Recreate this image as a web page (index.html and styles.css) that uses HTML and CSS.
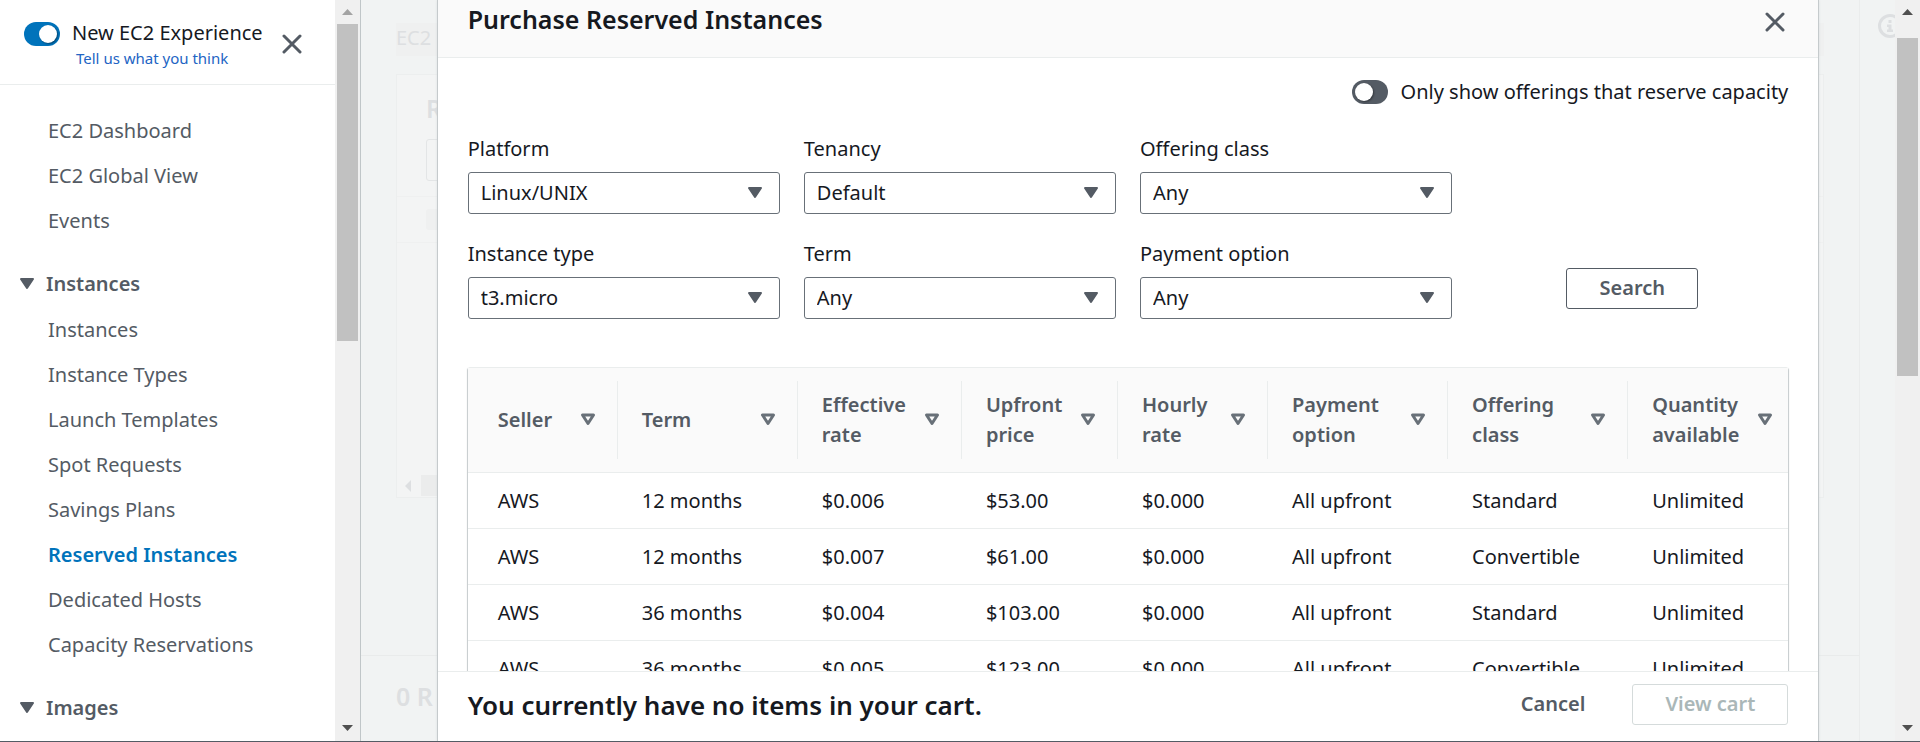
FILE: index.html
```html
<!DOCTYPE html>
<html lang="en">
<head>
  <meta charset="UTF-8">
  <title>Purchase Reserved Instances</title>
  <link rel="stylesheet" href="styles.css">
</head>
<body>

  <svg class="defs" width="0" height="0">
    <symbol id="caret" viewBox="0 0 16 13"><path d="M2 2h12l-6 9z" fill="currentColor" stroke="currentColor" stroke-width="2" stroke-linejoin="round"/></symbol>
    <symbol id="sort" viewBox="0 0 16 13"><path d="M2.5 2h11L8 10.500z" fill="none" stroke="currentColor" stroke-width="3" stroke-linejoin="round"/></symbol>
    <symbol id="close" viewBox="0 0 20 20"><path d="M2 2l16 16M18 2L2 18" fill="none" stroke="currentColor" stroke-width="3" stroke-linecap="round"/></symbol>
    <symbol id="arrow-up" viewBox="0 0 11 6"><path d="M0 6L5.500 0 11 6z" fill="currentColor"/></symbol>
    <symbol id="arrow-down" viewBox="0 0 11 6"><path d="M0 0h11L5.500 6z" fill="currentColor"/></symbol>
  </svg>

  <aside class="sidebar">
    <div class="sidebar-content">
      <div class="sidebar-header">
        <input type="checkbox" class="toggle" id="new-experience" checked>
        <div class="experience">
          <label for="new-experience">New EC2 Experience</label>
          <a href="#">Tell us what you think</a>
        </div>
        <button class="btn-icon" aria-label="Close navigation"><svg width="20" height="20"><use href="#close"/></svg></button>
      </div>
      <nav>
        <ul>
          <li><a href="#">EC2 Dashboard</a></li>
          <li><a href="#">EC2 Global View</a></li>
          <li><a href="#">Events</a></li>
        </ul>
        <button class="nav-heading"><svg width="16" height="13"><use href="#caret"/></svg>Instances</button>
        <ul>
          <li><a href="#">Instances</a></li>
          <li><a href="#">Instance Types</a></li>
          <li><a href="#">Launch Templates</a></li>
          <li><a href="#">Spot Requests</a></li>
          <li><a href="#">Savings Plans</a></li>
          <li><a href="#" class="active">Reserved Instances</a></li>
          <li><a href="#">Dedicated Hosts</a></li>
          <li><a href="#">Capacity Reservations</a></li>
        </ul>
        <button class="nav-heading"><svg width="16" height="13"><use href="#caret"/></svg>Images</button>
      </nav>
    </div>
    <div class="scrollbar">
      <svg class="disabled" width="11" height="6"><use href="#arrow-up"/></svg>
      <div class="track"><div class="thumb"></div></div>
      <svg width="11" height="6"><use href="#arrow-down"/></svg>
    </div>
  </aside>

  <main>
    <!-- page behind the dialog -->
    <div class="page">
      <div class="page-content">
        <div class="page-top">
          <div class="breadcrumb">EC2</div>
          <div class="panel">
            <div class="panel-header">
              <h2>R</h2>
              <div class="filter"></div>
            </div>
            <div class="panel-columns"><div class="chip"></div></div>
            <div class="panel-scroll">
              <svg width="6" height="12" viewBox="0 0 6 12"><path d="M6 0v12L0 6z" fill="currentColor"/></svg>
              <div class="panel-thumb"></div>
            </div>
          </div>
        </div>
        <div class="page-bottom"><h2>0 R</h2></div>
      </div>
      <div class="help-strip">
        <svg width="24" height="24" viewBox="0 0 24 24"><circle cx="12" cy="12" r="10.500" fill="none" stroke="currentColor" stroke-width="3"/><path d="M10.500 6h3v3h-3zM9 10.500h4.500v5H15V18H9v-2.500h1.500V13H9z" fill="currentColor"/></svg>
      </div>
    </div>

    <div class="modal" role="dialog" aria-labelledby="modal-title">
      <header class="modal-header">
        <h1 id="modal-title">Purchase Reserved Instances</h1>
        <button class="btn-icon" aria-label="Close"><svg width="20" height="20"><use href="#close"/></svg></button>
      </header>

      <div class="modal-body">
        <div class="capacity">
          <input type="checkbox" class="toggle" id="reserve-capacity">
          <label for="reserve-capacity">Only show offerings that reserve capacity</label>
        </div>

        <form class="filters">
          <div class="field">
            <label for="platform">Platform</label>
            <div class="select"><select id="platform"><option>Linux/UNIX</option></select><svg width="16" height="13"><use href="#caret"/></svg></div>
          </div>
          <div class="field">
            <label for="tenancy">Tenancy</label>
            <div class="select"><select id="tenancy"><option>Default</option></select><svg width="16" height="13"><use href="#caret"/></svg></div>
          </div>
          <div class="field">
            <label for="offering-class">Offering class</label>
            <div class="select"><select id="offering-class"><option>Any</option></select><svg width="16" height="13"><use href="#caret"/></svg></div>
          </div>
          <div class="field row-start">
            <label for="instance-type">Instance type</label>
            <div class="select"><select id="instance-type"><option>t3.micro</option></select><svg width="16" height="13"><use href="#caret"/></svg></div>
          </div>
          <div class="field">
            <label for="term">Term</label>
            <div class="select"><select id="term"><option>Any</option></select><svg width="16" height="13"><use href="#caret"/></svg></div>
          </div>
          <div class="field">
            <label for="payment-option">Payment option</label>
            <div class="select"><select id="payment-option"><option>Any</option></select><svg width="16" height="13"><use href="#caret"/></svg></div>
          </div>
          <button type="button" class="btn btn-search">Search</button>
        </form>

        <div class="table-wrap">
          <table>
            <colgroup>
              <col class="col-seller"><col class="col-wide"><col class="col-rate"><col class="col-price">
              <col class="col-hourly"><col class="col-wide"><col class="col-wide"><col class="col-quantity">
            </colgroup>
            <thead>
              <tr>
                <th><div>Seller<svg width="16" height="13"><use href="#sort"/></svg></div></th>
                <th><div>Term<svg width="16" height="13"><use href="#sort"/></svg></div></th>
                <th><div>Effective<br>rate<svg width="16" height="13"><use href="#sort"/></svg></div></th>
                <th><div>Upfront<br>price<svg width="16" height="13"><use href="#sort"/></svg></div></th>
                <th><div>Hourly<br>rate<svg width="16" height="13"><use href="#sort"/></svg></div></th>
                <th><div>Payment<br>option<svg width="16" height="13"><use href="#sort"/></svg></div></th>
                <th><div>Offering<br>class<svg width="16" height="13"><use href="#sort"/></svg></div></th>
                <th><div>Quantity<br>available<svg width="16" height="13"><use href="#sort"/></svg></div></th>
              </tr>
            </thead>
            <tbody>
              <tr><td>AWS</td><td>12 months</td><td>$0.006</td><td>$53.00</td><td>$0.000</td><td>All upfront</td><td>Standard</td><td>Unlimited</td></tr>
              <tr><td>AWS</td><td>12 months</td><td>$0.007</td><td>$61.00</td><td>$0.000</td><td>All upfront</td><td>Convertible</td><td>Unlimited</td></tr>
              <tr><td>AWS</td><td>36 months</td><td>$0.004</td><td>$103.00</td><td>$0.000</td><td>All upfront</td><td>Standard</td><td>Unlimited</td></tr>
              <tr><td>AWS</td><td>36 months</td><td>$0.005</td><td>$123.00</td><td>$0.000</td><td>All upfront</td><td>Convertible</td><td>Unlimited</td></tr>
            </tbody>
          </table>
        </div>
      </div>

      <footer class="modal-footer">
        <h2>You currently have no items in your cart.</h2>
        <button class="btn btn-link">Cancel</button>
        <button class="btn" disabled>View cart</button>
      </footer>
    </div>
  </main>

  <div class="scrollbar scrollbar-page">
    <svg width="11" height="6"><use href="#arrow-up"/></svg>
    <div class="track"><div class="thumb"></div></div>
    <svg width="11" height="6"><use href="#arrow-down"/></svg>
  </div>

</body>
</html>
```
FILE: styles.css
```css
* {
  box-sizing: border-box;
}

body {
  font-family: "Noto Sans", "Open Sans", sans-serif;
  font-size: 20px;
  line-height: 30px;
  color: #16191f;
  background: #f1f3f3;
  margin: 0;
  height: 100vh;
  display: flex;
  overflow: hidden;
  border-bottom: 1px solid #545b64;
}

h1, h2, ul {
  margin: 0;
  padding: 0;
}

h1, h2 {
  font-size: 25px;
  line-height: 34px;
  font-weight: 600;
}

button, select {
  font: inherit;
  color: inherit;
  cursor: pointer;
}

svg {
  display: block;
  flex: none;
}

.defs {
  position: absolute;
}

.btn-icon {
  border: none;
  background: none;
  padding: 0;
  color: #545b64;
}

.btn {
  height: 41px;
  padding: 0 32px 2px;
  border: 1px solid #545b64;
  border-radius: 3px;
  background: #fff;
  color: #545b64;
  font-weight: 600;
}

.btn-link {
  border-color: transparent;
}

.btn:disabled {
  border-color: #d5dbdb;
  color: #aab7b8;
}

.toggle {
  appearance: none;
  flex: none;
  width: 36px;
  height: 24px;
  margin: 0;
  padding: 3px;
  border-radius: 12px;
  background: #545b64;
}

.toggle::before {
  content: "";
  display: block;
  width: 18px;
  height: 18px;
  border-radius: 50%;
  background: #fff;
  box-shadow: 1px 1px 2px rgba(0,0,0,0.4);
}

.toggle:checked {
  background: #0073bb;
}

.toggle:checked::before {
  margin-left: auto;
}

/* sidebar */

.sidebar {
  flex: none;
  width: 361px;
  display: flex;
  background: #fff;
  border-right: 1px solid #c0c6c8;
}

.sidebar-content {
  flex: 1;
  overflow: hidden;
}

.sidebar-header {
  display: flex;
  align-items: center;
  height: 85px;
  padding: 4px 33px 0 24px;
  border-bottom: 1px solid #eaeded;
}

.sidebar-header .toggle {
  align-self: flex-start;
  margin-top: 18px;
}

.experience {
  flex: 1;
  margin: 0 0 3px 12px;
  white-space: nowrap;
}

.experience label {
  display: block;
}

.experience a {
  display: block;
  margin-left: 4px;
  font-size: 15px;
  line-height: 20px;
  color: #2264c4;
  text-decoration: none;
}

nav {
  padding-top: 23px;
}

nav ul {
  list-style: none;
}

nav li a {
  display: block;
  padding-left: 48px;
  line-height: 45px;
  color: #545b64;
  text-decoration: none;
}

nav li .active {
  color: #0073bb;
  font-weight: 600;
}

.nav-heading {
  display: flex;
  align-items: center;
  gap: 11px;
  width: 100%;
  height: 46px;
  margin-top: 18px;
  padding: 0 0 1px 19px;
  border: none;
  background: none;
  color: #545b64;
  font-weight: 600;
}

.scrollbar {
  flex: none;
  width: 25px;
  display: flex;
  flex-direction: column;
  align-items: center;
  padding: 9px 2px 10px;
  background: #f0f0f0;
  color: #505050;
}

.scrollbar .disabled {
  color: #a3a3a3;
}

.track {
  flex: 1;
  width: 21px;
  padding: 9px 0 12px;
}

.thumb {
  height: 46%;
  background: #c1c1c1;
}

.scrollbar-page .track {
  padding-top: 23px;
}

.scrollbar-page .thumb {
  height: 50%;
}

/* page behind the dialog */

main {
  flex: 1;
  min-width: 0;
  position: relative;
}

.page {
  display: flex;
  height: 100%;
  color: #dddfe1;
}

.page-content {
  flex: 1;
  display: flex;
  flex-direction: column;
}

.page-top {
  flex: 1;
  padding: 23px 35px 0;
}

.breadcrumb {
  height: 33px;
  background: #eff0f0;
}

.panel {
  height: 424px;
  margin-top: 18px;
  display: flex;
  flex-direction: column;
  border: 1px solid #eceeee;
  background: #f3f4f4;
}

.panel-header {
  height: 122px;
  padding: 16px 29px;
  border-bottom: 1px solid #eff0f0;
}

.filter {
  height: 42px;
  margin-top: 14px;
  border: 1px solid #e3e5e6;
  border-radius: 3px;
}

.panel-columns {
  height: 46px;
  padding: 12px 29px;
  border-bottom: 1px solid #eff0f0;
}

.chip {
  height: 21px;
  border-radius: 3px;
  background: #eff0f0;
}

.panel-scroll {
  display: flex;
  align-items: center;
  gap: 10px;
  margin-top: auto;
  padding: 1px 8px;
}

.panel-thumb {
  flex: 1;
  height: 21px;
  background: #ebecec;
}

.page-bottom {
  height: 86px;
  padding: 23px 35px;
  border-top: 1px solid #e9ebeb;
}

.help-strip {
  width: 36px;
  padding: 14px 0 0 18px;
  border-left: 1px solid #eaecec;
  overflow: hidden;
}

/* dialog */

.modal {
  position: absolute;
  top: 0;
  bottom: 0;
  left: 5%;
  right: 5%;
  display: flex;
  flex-direction: column;
  background: #fff;
  box-shadow: 0 0 0 1px #c5cacc, 0 0 3px #c5cacc;
}

.modal-header {
  display: flex;
  justify-content: space-between;
  padding: 2px 33px 21px 30px;
  background: #fafafa;
  border-bottom: 1px solid #eaeded;
}

.modal-header .btn-icon {
  padding-top: 5px;
}

.modal-body {
  flex: 1;
  min-height: 0;
  overflow: hidden;
  padding: 19px 30px 0;
}

.capacity {
  display: flex;
  justify-content: flex-end;
  align-items: center;
  gap: 13px;
}

.filters {
  display: grid;
  grid-template-columns: repeat(4, 1fr);
  gap: 25px 24px;
  margin: 27px 0 48px;
}

.field label {
  display: block;
  margin-bottom: 8px;
}

.row-start {
  grid-column: 1;
}

.select {
  position: relative;
}

.select select {
  appearance: none;
  display: block;
  width: 100%;
  height: 42px;
  padding: 0 12px;
  border: 1px solid #687078;
  border-radius: 3px;
  background: #fff;
}

.select svg {
  position: absolute;
  right: 17px;
  top: 14px;
  color: #545b64;
  pointer-events: none;
}

.btn-search {
  justify-self: center;
  align-self: end;
  margin-bottom: 10px;
}

.table-wrap {
  border-top: 1px solid #eaeded;
  border-radius: 2px;
  box-shadow: -1px 1px 1px #c5cacc, 1px 1px 1px #c5cacc;
}

table {
  width: 100%;
  table-layout: fixed;
  border-collapse: separate;
  border-spacing: 0;
  background: #fff;
}

.col-seller, .col-hourly { width: 150px; }
.col-wide { width: 180px; }
.col-rate { width: 164px; }
.col-price { width: 156px; }
.col-quantity { width: 160px; }

th {
  padding: 13px 0;
  background: #fafafa;
  border-bottom: 1px solid #eaeded;
  color: #545b64;
  font-weight: 600;
  text-align: left;
}

th div {
  position: relative;
  display: flex;
  flex-wrap: wrap;
  align-content: center;
  height: 78px;
  padding: 0 20px 0 24px;
  border-right: 1px solid #eaeded;
}

th svg {
  position: absolute;
  right: 21px;
  top: 32px;
  color: #687078;
}

th:first-child div,
td:first-child {
  padding-left: 30px;
}

th:last-child div {
  border-right: none;
}

th:last-child svg {
  right: 15px;
}

td {
  height: 56px;
  padding: 1px 0 0 24px;
  border-bottom: 1px solid #eaeded;
}

.modal-footer {
  display: flex;
  align-items: center;
  gap: 14px;
  height: 70px;
  padding: 0 30px 4px;
  border-top: 1px solid #eaeded;
}

.modal-footer h2 {
  margin-right: auto;
  font-size: 26px;
}
```
